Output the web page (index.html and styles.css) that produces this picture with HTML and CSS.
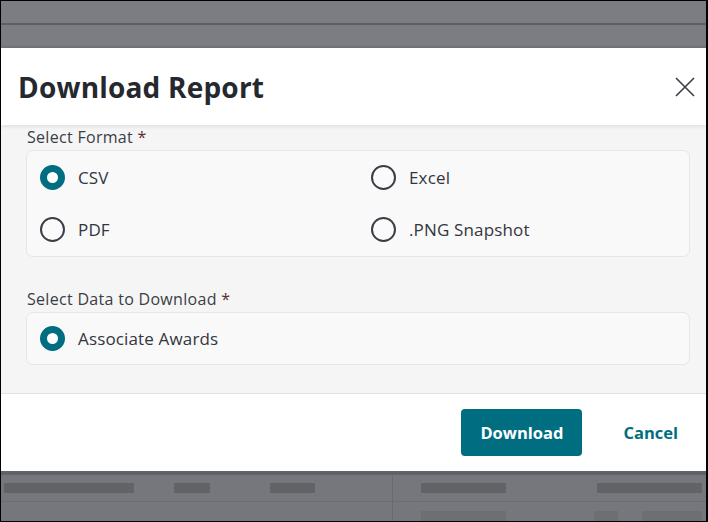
FILE: index.html
```html
<!DOCTYPE html>
<html lang="en">
<head>
<meta charset="utf-8">
<title>Download Report</title>
<link rel="stylesheet" href="styles.css">
</head>
<body>
<div class="screen">
  <div class="backdrop-top"><div class="bd-line"></div></div>
  <div class="modal">
    <header class="modal-header">
      <h1 class="modal-title">Download Report</h1>
      <button class="close" aria-label="Close">
        <svg width="20" height="20" viewBox="0 0 20 20"><path d="M1 1L19 19M19 1L1 19" stroke="#3a3d45" stroke-width="1.6" fill="none"/></svg>
      </button>
    </header>
    <div class="modal-body">
      <div class="group">
        <div class="group-label">Select Format <span class="req">*</span></div>
        <div class="options two-col">
          <label class="option"><span class="radio checked"></span>CSV</label>
          <label class="option"><span class="radio"></span>Excel</label>
          <label class="option"><span class="radio"></span>PDF</label>
          <label class="option"><span class="radio"></span>.PNG Snapshot</label>
        </div>
      </div>
      <div class="group group-2">
        <div class="group-label">Select Data to Download <span class="req">*</span></div>
        <div class="options">
          <label class="option"><span class="radio checked"></span>Associate Awards</label>
        </div>
      </div>
    </div>
    <footer class="modal-footer">
      <button class="btn-primary">Download</button>
      <button class="btn-link">Cancel</button>
    </footer>
  </div>
  <div class="backdrop-bottom">
    <div class="bd-row">
      <div class="bd-cell c1"><span class="blk w168"></span><span class="blk w30"></span><span class="blk w40"></span></div>
      <div class="bd-cell c2"><span class="blk w85"></span><span class="blk w105 push"></span></div>
    </div>
    <div class="bd-row row2">
      <div class="bd-cell c1"></div>
      <div class="bd-cell c2"><span class="blk faint w85"></span><span class="blk faint w24 push"></span><span class="blk faint w60"></span></div>
    </div>
  </div>
</div>
</body>
</html>
```

FILE: styles.css
```css
* { box-sizing: border-box; }
html { background: #000; }
body {
  margin: 0;
  padding: 1px 2px 1px 1px;
  background: #000;
  font-family: "Open Sans", "Lato", sans-serif;
}
.screen {
  width: 705px;
  height: 520px;
  display: flex;
  flex-direction: column;
  background: #7b7c81;
  overflow: hidden;
}
.backdrop-top {
  height: 47px;
  flex: none;
  padding-top: 22px;
  background: linear-gradient(#7c7d82 0, #7c7d82 44px, #6e6f74 47px);
}
.bd-line { height: 2px; background: #5e5f64; }

.modal {
  height: 423px;
  flex: none;
  display: flex;
  flex-direction: column;
  background: #fff;
  border-radius: 4px 4px 0 0;
}
.modal-header {
  height: 77px;
  flex: none;
  display: flex;
  align-items: center;
  justify-content: space-between;
  padding: 0 8px 0 17px;
  background: #fff;
  box-shadow: 0 2px 4px rgba(0,0,0,0.08);
  position: relative;
  z-index: 1;
}
.modal-title {
  margin: 0;
  font-size: 28px;
  font-weight: 700;
  color: #25282f;
  letter-spacing: 0.2px;
}
.close {
  width: 26px;
  height: 26px;
  border: 0;
  padding: 3px;
  background: none;
  display: flex;
  align-items: center;
  justify-content: center;
}
.modal-body {
  height: 269px;
  flex: none;
  background: #f5f5f5;
  padding: 2px 16px 0 25px;
  border-bottom: 1px solid #e2e2e2;
}
.group-label {
  height: 20px;
  line-height: 20px;
  font-size: 16px;
  letter-spacing: 0.3px;
  color: #3a3d45;
  padding-left: 1px;
  margin-bottom: 3px;
}
.req { color: #5a2d2d; }
.group-2 { margin-top: 32px; }
.options {
  border: 1px solid #e6e6e6;
  border-radius: 7px;
  background: #f9f9f9;
}
.two-col {
  display: grid;
  grid-template-columns: 1fr 1fr;
}
.option {
  height: 51px;
  display: flex;
  align-items: center;
  gap: 13px;
  padding-left: 13px;
  font-size: 17px;
  letter-spacing: 0.15px;
  color: #33363e;
}
.two-col .option { height: 52.5px; }
.radio {
  width: 25px;
  height: 25px;
  flex: none;
  border-radius: 50%;
  border: 2px solid #3b3e46;
  background: #fafafa;
}
.radio.checked {
  border: 7.5px solid #006e80;
  background: #fff;
}
.modal-footer {
  flex: 1;
  display: flex;
  align-items: center;
  justify-content: flex-end;
  padding: 0 12px 0 0;
  gap: 25px;
}
.btn-primary {
  width: 121px;
  height: 47px;
  border: 0;
  border-radius: 4px;
  background: #006e80;
  color: #fff;
  font-family: inherit;
  font-size: 16.5px;
  font-weight: 700;
}
.btn-link {
  height: 47px;
  border: 0;
  background: none;
  padding: 0 16px;
  color: #006e80;
  font-family: inherit;
  font-size: 16.5px;
  font-weight: 700;
}

.backdrop-bottom {
  flex: 1;
  background: #76777c;
  border-top: 4px solid #616267;
}
.bd-row {
  display: flex;
  height: 27px;
  border-bottom: 1px solid #6c6d72;
}
.row2 { border-bottom: 0; }
.bd-cell { display: flex; align-items: center; }
.c1 { width: 392px; padding-left: 3px; border-right: 1px solid #6a6b70; gap: 40px; }
.c2 { flex: 1; padding-left: 28px; padding-right: 4px; gap: 4px; }
.blk { height: 10px; background: #5f6065; opacity: 0.9; }
.faint { opacity: 0.35; }
.push { margin-left: auto; }
.w168 { width: 130px; }
.w30 { width: 36px; }
.w40 { width: 45px; margin-left: 20px; }
.w85 { width: 85px; }
.w105 { width: 105px; }
.w24 { width: 24px; }
.w60 { width: 60px; margin-left: 20px; }
```
